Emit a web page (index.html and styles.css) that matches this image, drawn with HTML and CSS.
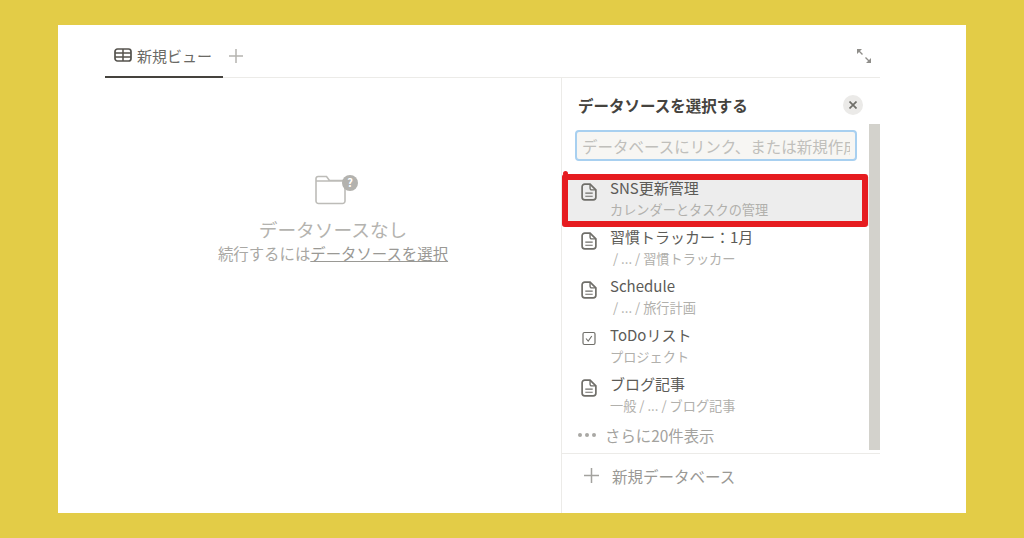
FILE: index.html
```html
<!DOCTYPE html>
<html lang="ja">
  <head>
    <meta charset="UTF-8" />
    <meta name="viewport" content="width=device-width, initial-scale=1.0" />
    <title>新規ビュー</title>
    <link rel="stylesheet" href="styles.css">
  </head>
  <body>
    <div class="card">
      <div class="topbar">
        <div class="tab">
          <svg class="tab-icon" width="18" height="14" viewBox="0 0 18 14">
            <rect x="1" y="1" width="16" height="12" rx="2.5" fill="none" stroke="#55534e" stroke-width="1.7" />
            <path d="M1 5h16M1 9h16M9 1v12" fill="none" stroke="#55534e" stroke-width="1.5" />
          </svg>
          新規ビュー
        </div>
        <svg class="tab-add" width="14" height="14" viewBox="0 0 14 14">
          <path d="M7 0v14M0 7h14" stroke="#b5b4b0" stroke-width="1.5" />
        </svg>
        <svg class="expand" width="16" height="16" viewBox="0 0 16 16">
          <path d="M2 2l4.500 4.500M9.500 9.500L14 14" stroke="#8f8e8a" stroke-width="1.4" fill="none" />
          <path d="M1 1h5L1 6zM15 15h-5l5-5z" fill="#8f8e8a" />
        </svg>
      </div>

      <div class="main">
        <div class="empty">
          <svg class="empty-icon" width="44" height="30" viewBox="0 0 44 30">
            <path d="M1 6V3.500A2 2 0 0 1 3 1.500h8.500l3 4H28M1 6h27M1 6v20a2.500 2.500 0 0 0 2.500 2.500h24a2.500 2.500 0 0 0 2.500-2.500V13" fill="none" stroke="#bdbcb8" stroke-width="1.6" />
            <circle cx="35" cy="8" r="8" fill="#b3b2ae" />
            <text x="35" y="12" text-anchor="middle" class="badge-mark">?</text>
          </svg>
          <div class="empty-title">データソースなし</div>
          <div class="empty-text">続行するには<span class="empty-link">データソースを選択</span></div>
        </div>

        <div class="panel">
          <div class="panel-head">
            <span class="panel-title">データソースを選択する</span>
            <span class="close">
              <svg width="8" height="8" viewBox="0 0 8 8">
                <path d="M0.500 0.500l7 7M7.500 0.500l-7 7" stroke="#6f6e69" stroke-width="1.7" />
              </svg>
            </span>
          </div>

          <div class="scroll">
            <div class="list">
              <div class="search">
                <input type="text" placeholder="データベースにリンク、または新規作成" />
              </div>

              <div class="row selected">
                <svg class="row-icon" width="16" height="18" viewBox="0 0 15 17"><use href="#doc" /></svg>
                <div>
                  <div class="row-title">SNS更新管理</div>
                  <div class="row-sub">カレンダーとタスクの管理</div>
                </div>
              </div>
              <div class="row">
                <svg class="row-icon" width="16" height="18" viewBox="0 0 15 17"><use href="#doc" /></svg>
                <div>
                  <div class="row-title">習慣トラッカー：1月</div>
                  <div class="row-sub">&nbsp;/ ... / 習慣トラッカー</div>
                </div>
              </div>
              <div class="row">
                <svg class="row-icon" width="16" height="18" viewBox="0 0 15 17"><use href="#doc" /></svg>
                <div>
                  <div class="row-title">Schedule</div>
                  <div class="row-sub">&nbsp;/ ... / 旅行計画</div>
                </div>
              </div>
              <div class="row">
                <svg class="row-icon check" width="16" height="15" viewBox="0 0 15 15">
                  <rect x="1.500" y="1.500" width="12" height="12" rx="1.500" fill="none" stroke="#6f6e69" stroke-width="1.200" />
                  <path d="M4.500 7.500l2.200 2.500 3.600-5" fill="none" stroke="#6f6e69" stroke-width="1.100" />
                </svg>
                <div>
                  <div class="row-title">ToDoリスト</div>
                  <div class="row-sub">プロジェクト</div>
                </div>
              </div>
              <div class="row">
                <svg class="row-icon" width="16" height="18" viewBox="0 0 15 17"><use href="#doc" /></svg>
                <div>
                  <div class="row-title">ブログ記事</div>
                  <div class="row-sub">一般 / ... / ブログ記事</div>
                </div>
              </div>

              <div class="more">
                <span class="dots"><i></i><i></i><i></i></span>
                さらに20件表示
              </div>
            </div>
            <div class="scrollbar"></div>
          </div>

          <div class="panel-foot">
            <svg width="15" height="15" viewBox="0 0 15 15">
              <path d="M7.500 0v15M0 7.500h15" stroke="#a3a29e" stroke-width="1.500" />
            </svg>
            新規データベース
          </div>
        </div>
      </div>
    </div>

    <svg width="0" height="0" class="defs">
      <symbol id="doc" viewBox="0 0 15 17">
        <path d="M3.500 1h5L14 6.500V13.500a2.500 2.500 0 0 1-2.500 2.500h-8A2.500 2.500 0 0 1 1 13.500v-10A2.500 2.500 0 0 1 3.500 1z" fill="none" stroke="#6f6e69" stroke-width="1.600" />
        <path d="M8.500 1v4a1.500 1.500 0 0 0 1.500 1.500h4" fill="none" stroke="#6f6e69" stroke-width="1.300" />
        <path d="M4 9.500h7M4 12.500h7" stroke="#6f6e69" stroke-width="1.100" />
      </symbol>
    </svg>
  </body>
</html>
```

FILE: styles.css
```css
* {
  box-sizing: border-box;
  font-family: "Noto Sans CJK JP", "Noto Sans", sans-serif;
}

body {
  margin: 0;
  height: 538px;
  padding: 25px 58px;
  background-color: #e3cc47;
  overflow: hidden;
}

.defs {
  position: absolute;
}

.card {
  height: 488px;
  padding: 0 86px 0 47px;
  background-color: white;
  display: flex;
  flex-direction: column;
}

.topbar {
  height: 53px;
  flex-shrink: 0;
  display: flex;
  align-items: center;
  border-bottom: 1px solid #ecebe8;
}

.tab {
  width: 118px;
  height: 53px;
  padding: 10px 0 0 9px;
  display: flex;
  align-items: center;
  gap: 5px;
  font-size: 15px;
  color: #6a6965;
  white-space: nowrap;
  border-bottom: 2px solid #45433e;
}

.tab-icon {
  flex-shrink: 0;
}

.tab-add {
  margin: 10px 0 0 6px;
}

.expand {
  margin: 9px 8px 0 auto;
}

.main {
  flex: 1;
  display: flex;
  min-height: 0;
}

.empty {
  flex: 1;
  padding-top: 97px;
  display: flex;
  flex-direction: column;
  align-items: center;
}

.empty-icon {
  margin-left: 7px;
}

.badge-mark {
  font-size: 11px;
  font-weight: bold;
  fill: white;
}

.empty-title {
  margin-top: 11px;
  font-size: 18.700px;
  line-height: 26px;
  color: #b4b3af;
}

.empty-text {
  font-size: 15.400px;
  line-height: 22px;
  color: #a9a8a4;
}

.empty-link {
  text-decoration: underline;
  color: #9a9995;
}

.panel {
  width: 319px;
  flex-shrink: 0;
  display: flex;
  flex-direction: column;
  border-left: 1px solid #ecebe8;
}

.panel-head {
  height: 46px;
  flex-shrink: 0;
  padding: 8px 8px 0 16px;
  display: flex;
  align-items: center;
  justify-content: space-between;
}

.panel-title {
  font-size: 15.500px;
  font-weight: bold;
  color: #45433e;
}

.close {
  width: 20px;
  height: 20px;
  margin-right: 9px;
  border-radius: 50%;
  background-color: #ebeae8;
  display: flex;
  align-items: center;
  justify-content: center;
}

.scroll {
  height: 330px;
  flex-shrink: 0;
  display: flex;
  border-bottom: 1px solid #ecebe8;
}

.list {
  flex: 1;
  min-width: 0;
}

.search {
  height: 53px;
  padding: 6px 12px 16px 13px;
}

.search input {
  width: 100%;
  height: 31px;
  padding: 0 5px;
  font-size: 15.500px;
  background-color: #f7f6f3;
  border: 2px solid #a8d0f0;
  border-radius: 4px;
  outline: none;
}

.search input::placeholder {
  color: #c0bfbb;
}

.row {
  position: relative;
  height: 49px;
  padding-left: 19px;
  display: flex;
  gap: 13px;
}

.row-icon {
  margin-top: 6px;
  flex-shrink: 0;
}

.row-icon.check {
  margin-top: 7px;
}

.row-title {
  font-size: 15px;
  line-height: 22px;
  color: #5c5b57;
  white-space: nowrap;
}

.row-sub {
  font-size: 13.200px;
  line-height: 21px;
  color: #b1b0ac;
  white-space: nowrap;
}

.row.selected {
  background-color: #ededed;
}

/* marca vermelha por cima da linha */
.row.selected::after {
  content: "";
  position: absolute;
  box-sizing: border-box;
  top: -3px;
  left: 0;
  right: 1px;
  height: 53px;
  border: 6px solid #e61c20;
  border-radius: 3px;
}

.row.selected::before {
  content: "";
  position: absolute;
  top: -6px;
  left: 1px;
  width: 5px;
  height: 5px;
  border-radius: 50%;
  background-color: #e61c20;
}

.more {
  height: 29px;
  padding: 0 0 4px 16px;
  display: flex;
  align-items: center;
  gap: 9px;
  font-size: 15.400px;
  color: #a3a29e;
}

.dots {
  display: flex;
  gap: 3px;
}

.dots i {
  width: 4px;
  height: 4px;
  border-radius: 50%;
  background-color: #a9a8a4;
}

.scrollbar {
  width: 11px;
  flex-shrink: 0;
  margin-bottom: 3px;
  background-color: #d3d2cc;
}

.panel-foot {
  height: 45px;
  padding: 0 0 2px 22px;
  display: flex;
  align-items: center;
  gap: 13px;
  font-size: 15.500px;
  color: #9a9995;
}
```
